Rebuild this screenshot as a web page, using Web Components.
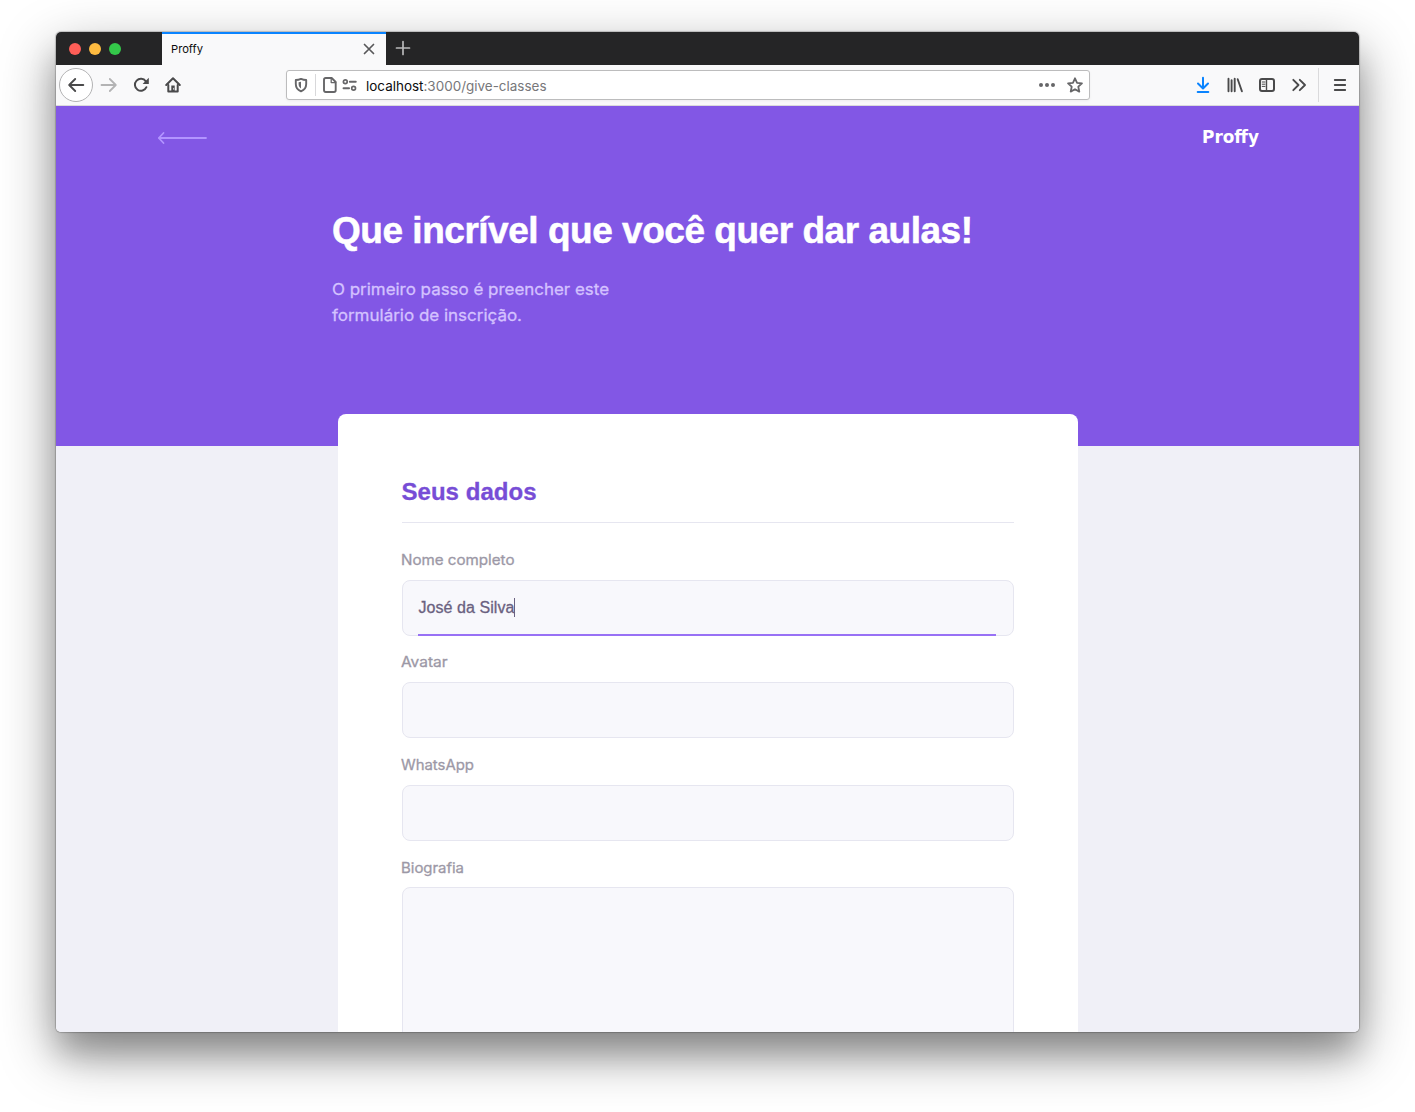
<!DOCTYPE html>
<html lang="pt-BR">
<head>
<meta charset="utf-8">
<title>Proffy</title>
<style>
html,body{margin:0;height:100%;overflow:hidden;background:#fff}
body{padding:32px 56px 80px;box-sizing:border-box;font-family:"Liberation Sans",sans-serif}
</style>
</head>
<body>
<browser-window>
  <tab-bar slot="chrome"></tab-bar>
  <nav-bar slot="chrome"></nav-bar>
  <page-hero></page-hero>
  <form-card heading="Seus dados">
    <form-field label="Nome completo" label-width="113.5" value="José da Silva" active></form-field>
    <form-field label="Avatar" label-width="46.5"></form-field>
    <form-field label="WhatsApp" label-width="73"></form-field>
    <form-field label="Biografia" label-width="63" tall></form-field>
  </form-card>
</browser-window>
<script>
const define = (name, html, setup) => customElements.define(name, class extends HTMLElement {
  connectedCallback() {
    if (this.shadowRoot) return;
    this.attachShadow({ mode: 'open' }).innerHTML = typeof html === 'function' ? html(this) : html;
    if (setup) setup(this);
  }
});

/* One line of text fitted to the given width, by tracking or, with "stretch", by widening the letters. */
define('text-line', '<style>:host{display:inline-block;white-space:pre}span{display:inline-block;white-space:pre;transform-origin:0 50%}</style><span><slot></slot></span>', el => {
  const span = el.shadowRoot.querySelector('span');
  const w = parseFloat(el.getAttribute('width'));
  const natural = span.getBoundingClientRect().width;
  const n = el.textContent.length;
  if (!w || !natural) return;
  if (el.hasAttribute('stretch')) span.style.transform = `scaleX(${w / natural})`;
  else span.style.letterSpacing = ((w - natural) / (n - 1)) + 'px';
  el.style.width = w + 'px';
});

const icons = {
  back: '<path d="M15.3 8H1.4M7.2 2 1.2 8l6 6" stroke-width="1.9"/>',
  forward: '<path d="M.5 8h14.1M8.8 2l6 6-6 6" stroke-width="1.8"/>',
  reload: '<path d="M13.4 10.2A6 6 0 1 1 12.8 4.3" stroke-width="2"/><path d="M15.800 .800v6.200H9.600z" fill="currentColor" stroke="none"/>',
  home: '<path d="M1.200 8 8 1.300 14.800 8" stroke-width="2"/><path d="M3.300 8v6.500h9.400V8" stroke-width="2"/><path d="M6.300 8.600h3.400v5.400H6.300z" fill="currentColor" stroke="none"/><path d="M8.600 11.300v1" stroke="#f9f9fa" stroke-width=".8"/>',
  shield: '<path d="M8 1.9c1.9.8 3.7 1.1 5.2 1.1v4c0 3.6-2 6-5.2 7.3C4.800 13 2.800 10.600 2.800 7V3C4.300 3 6.100 2.700 8 1.900z" stroke-width="1.9"/><path d="M8 4.800v6.600C6.200 10.300 5.600 8.800 5.600 7V5.200z" fill="currentColor" stroke="none"/>',
  page: '<path d="M3.700 1h6l4 4v8.300q0 1.700-1.700 1.700H3.700Q2 15 2 13.300V2.700Q2 1 3.700 1z" stroke-width="1.900"/><path d="M9.200 1v4.600h4.500" stroke-width="1.300"/>',
  perms: '<circle cx="3.300" cy="4.700" r="1.900" stroke-width="1.700"/><path d="M7.800 4.700h6M1.500 11.300h5.600" stroke-width="1.900"/><circle cx="11.600" cy="11.300" r="1.900" stroke-width="1.700"/>',
  dots: '<g fill="currentColor" stroke="none"><circle cx="2" cy="8" r="2"/><circle cx="8" cy="8" r="2"/><circle cx="14" cy="8" r="2"/></g>',
  star: '<path d="m8 1.300 2.050 4.500 4.900.550-3.650 3.350 1 4.950L8 12.200l-4.300 2.450 1-4.950L1.050 6.350l4.900-.550z" stroke-width="1.800"/>',
  download: '<path d="M8 .800v10.400M3 6.500l5 5 5-5M2.700 15h10.600" stroke-width="2"/>',
  library: '<path d="M1.500 1.700v12.600M4.600 3.200v11.100M7.700 1.700v12.600M10.700 2.200l4.200 12.100" stroke-width="1.900"/>',
  sidebar: '<rect x="1" y="2" width="14" height="12" rx="2" stroke-width="2"/><path d="M7.500 2v12" stroke-width="1.400"/><path d="M3.200 5h2.800M3.200 7.200h2.800M3.200 9.400h2.800" stroke-width="1"/>',
  more: '<path d="m2.300 2.800 5.200 5.200-5.200 5.200M8.800 2.800 14 8l-5.200 5.200" stroke-width="1.900"/>',
  menu: '<path d="M2.800 3h10.400M2.800 8h10.400M2.800 13h10.400" stroke-width="1.900"/>',
  close: '<path d="m3.500 3.500 9 9M12.500 3.500l-9 9" stroke-width="1.700"/>',
  plus: '<path d="M8 1.500v13M1.500 8h13" stroke-width="1.700"/>'
};
define('ui-icon', el => `<style>:host{display:block;flex:none;width:16px;height:16px;color:#4a4a4b}svg{display:block;width:100%;height:100%;overflow:visible}</style>
<svg viewBox="0 0 16 16" fill="none" stroke="currentColor" stroke-linecap="round" stroke-linejoin="round">${icons[el.getAttribute('name')]}</svg>`);

define('browser-window', `<style>
:host{display:block;height:1000px;border-radius:5px;box-shadow:0 0 1px 1px rgba(0,0,0,.2),0 24px 30px -2px rgba(0,0,0,.2),0 20px 56px rgba(0,0,0,.4)}
.frame{height:100%;display:flex;flex-direction:column;border-radius:5px;overflow:hidden;background:#f0f0f7}
main{flex:1;min-height:0;overflow:hidden}
</style><div class="frame"><slot name="chrome"></slot><main><slot></slot></main></div>`);

define('tab-bar', `<style>
:host{display:flex;flex:none;height:33px;background:#252526}
.lights{display:flex;gap:8px;width:106px;padding:11px 0 0 13px;box-sizing:border-box}
.lights i{width:12px;height:12px;border-radius:50%;background:#fe5e57}
.lights i:nth-child(2){background:#febb40}.lights i:nth-child(3){background:#34c84a}
.tab{display:flex;align-items:center;justify-content:space-between;width:224px;box-sizing:border-box;border-top:2px solid #0a84ff;background:#f9f9fa;padding:0 9px 1px;font:11px Inter,sans-serif;color:#0c0c0d}
.new{padding:8px 9px}
</style><div class="lights"><i></i><i></i><i></i></div>
<div class="tab"><text-line stretch width="32">Proffy</text-line><ui-icon name="close" style="color:#58585a"></ui-icon></div>
<div class="new"><ui-icon name="plus" style="color:#b9b9ba"></ui-icon></div>`);

define('nav-bar', `<style>
:host{display:flex;flex:none;align-items:center;height:41px;box-sizing:border-box;background:#f9f9fa;border-bottom:1px solid #dadadc;padding-left:3px}
.back{box-sizing:border-box;width:34px;height:34px;border:1px solid #b3b3b4;border-radius:50%;background:#fff;display:grid;place-items:center;margin-right:8px}
.group{display:flex;gap:16px}
.url{display:flex;align-items:center;width:804px;height:30px;box-sizing:border-box;margin:0 105px;border:1px solid #bcbcbd;border-radius:3px;background:#fff;padding:0 6px;box-shadow:0 1px 3px rgba(0,0,0,.05);font:13.500px Inter,sans-serif;color:#77777a}
.url ui-icon{color:#666668}
.sep{width:1px;height:22px;background:#d8d8da;margin:0 6px}
.addr{margin:2px auto 0 8px}
b{font-weight:400;color:#0c0c0d}
.line{width:1px;height:34px;background:#dadadc;margin:0 13px 0 11px}
</style>
<div class="back"><ui-icon name="back"></ui-icon></div>
<div class="group"><ui-icon name="forward" style="color:#b3b3b4"></ui-icon><ui-icon name="reload"></ui-icon><ui-icon name="home"></ui-icon></div>
<div class="url"><ui-icon name="shield"></ui-icon><span class="sep"></span><ui-icon name="page"></ui-icon><ui-icon name="perms" style="margin-left:4px"></ui-icon>
<span class="addr"><text-line stretch width="180.500"><b>localhost</b>:3000/give-classes</text-line></span>
<ui-icon name="dots" style="margin-right:12px"></ui-icon><ui-icon name="star"></ui-icon></div>
<div class="group"><ui-icon name="download" style="color:#0a84ff"></ui-icon><ui-icon name="library"></ui-icon><ui-icon name="sidebar"></ui-icon><ui-icon name="more"></ui-icon></div>
<span class="line"></span><ui-icon name="menu"></ui-icon>`);

define('page-hero', `<style>
:host{display:block;height:340px;box-sizing:border-box;background:#8257e5;color:#fff}
.top{display:flex;justify-content:space-between;align-items:center;height:64px;padding:0 100px 0 101px}
.top svg{display:block;width:50px;height:14px}
.logo{font:bold 17px "DejaVu Sans",sans-serif;padding-bottom:2px}
.copy{padding:36px 0 0 276px}
h1{margin:0;font:bold 37px/50px "Liberation Sans",sans-serif;-webkit-text-stroke:.5px #fff}
p{margin:20px 0 0;font:400 16px/26px Inter,sans-serif;color:#d4c2ff;-webkit-text-stroke:.3px #d4c2ff}
p text-line{display:block}
</style>
<div class="top"><svg viewBox="0 0 50 14" fill="none" stroke="#b294ff" stroke-width="1.800" stroke-linecap="round" stroke-linejoin="round"><path d="M49 7H1.800M6.500 2 1.800 7l4.700 5"/></svg>
<span class="logo"><text-line stretch width="57">Proffy</text-line></span></div>
<div class="copy"><h1><text-line width="641">Que incrível que você quer dar aulas!</text-line></h1>
<p><text-line stretch width="277">O primeiro passo é preencher este</text-line><text-line stretch width="190">formulário de inscrição.</text-line></p></div>`);

define('form-card', el => `<style>
:host{display:block;position:relative;box-sizing:border-box;width:740px;height:900px;margin:-32px 0 0 282px;padding:64px 64px 0;border-radius:8px;background:#fff}
h2{margin:0 0 10.500px;height:44px;border-bottom:1px solid #e6e6f0;font:bold 24px/28px "Liberation Sans",sans-serif;color:#774dd6;-webkit-text-stroke:.3px #774dd6}
h2 text-line{margin-left:-.5px}
</style><h2><text-line width="135">${el.getAttribute('heading')}</text-line></h2><slot></slot>`);

define('form-field', el => `<style>
:host{display:block;padding-top:14.400px}
label{display:block;height:24px;margin:0 0 8px -.6px;font:400 14px/${el.hasAttribute('tall') ? 25.2 : 24.5}px Inter,sans-serif;color:#9c98a6;-webkit-text-stroke:.3px #9c98a6}
.box{position:relative;display:flex;align-items:center;height:${el.hasAttribute('tall') ? 300 : 56}px;box-sizing:border-box;border:1px solid #e6e6f0;border-radius:8px;background:#f8f8fc;padding:0 15.400px;font:16px "Liberation Sans",sans-serif;color:#6a6180;-webkit-text-stroke:.3px #6a6180}
.caret{width:1px;height:19px;background:#6a6180}
.box.on::after{content:"";position:absolute;left:15px;right:17px;bottom:-1px;height:2px;background:#9871f5}
</style><label><text-line stretch width="${el.getAttribute('label-width')}">${el.getAttribute('label')}</text-line></label>
<div class="box${el.hasAttribute('active') ? ' on' : ''}">${el.hasAttribute('value') ? `<text-line width="96">${el.getAttribute('value')}</text-line><span class="caret"></span>` : ''}</div>`);
</script>
</body>
</html>
